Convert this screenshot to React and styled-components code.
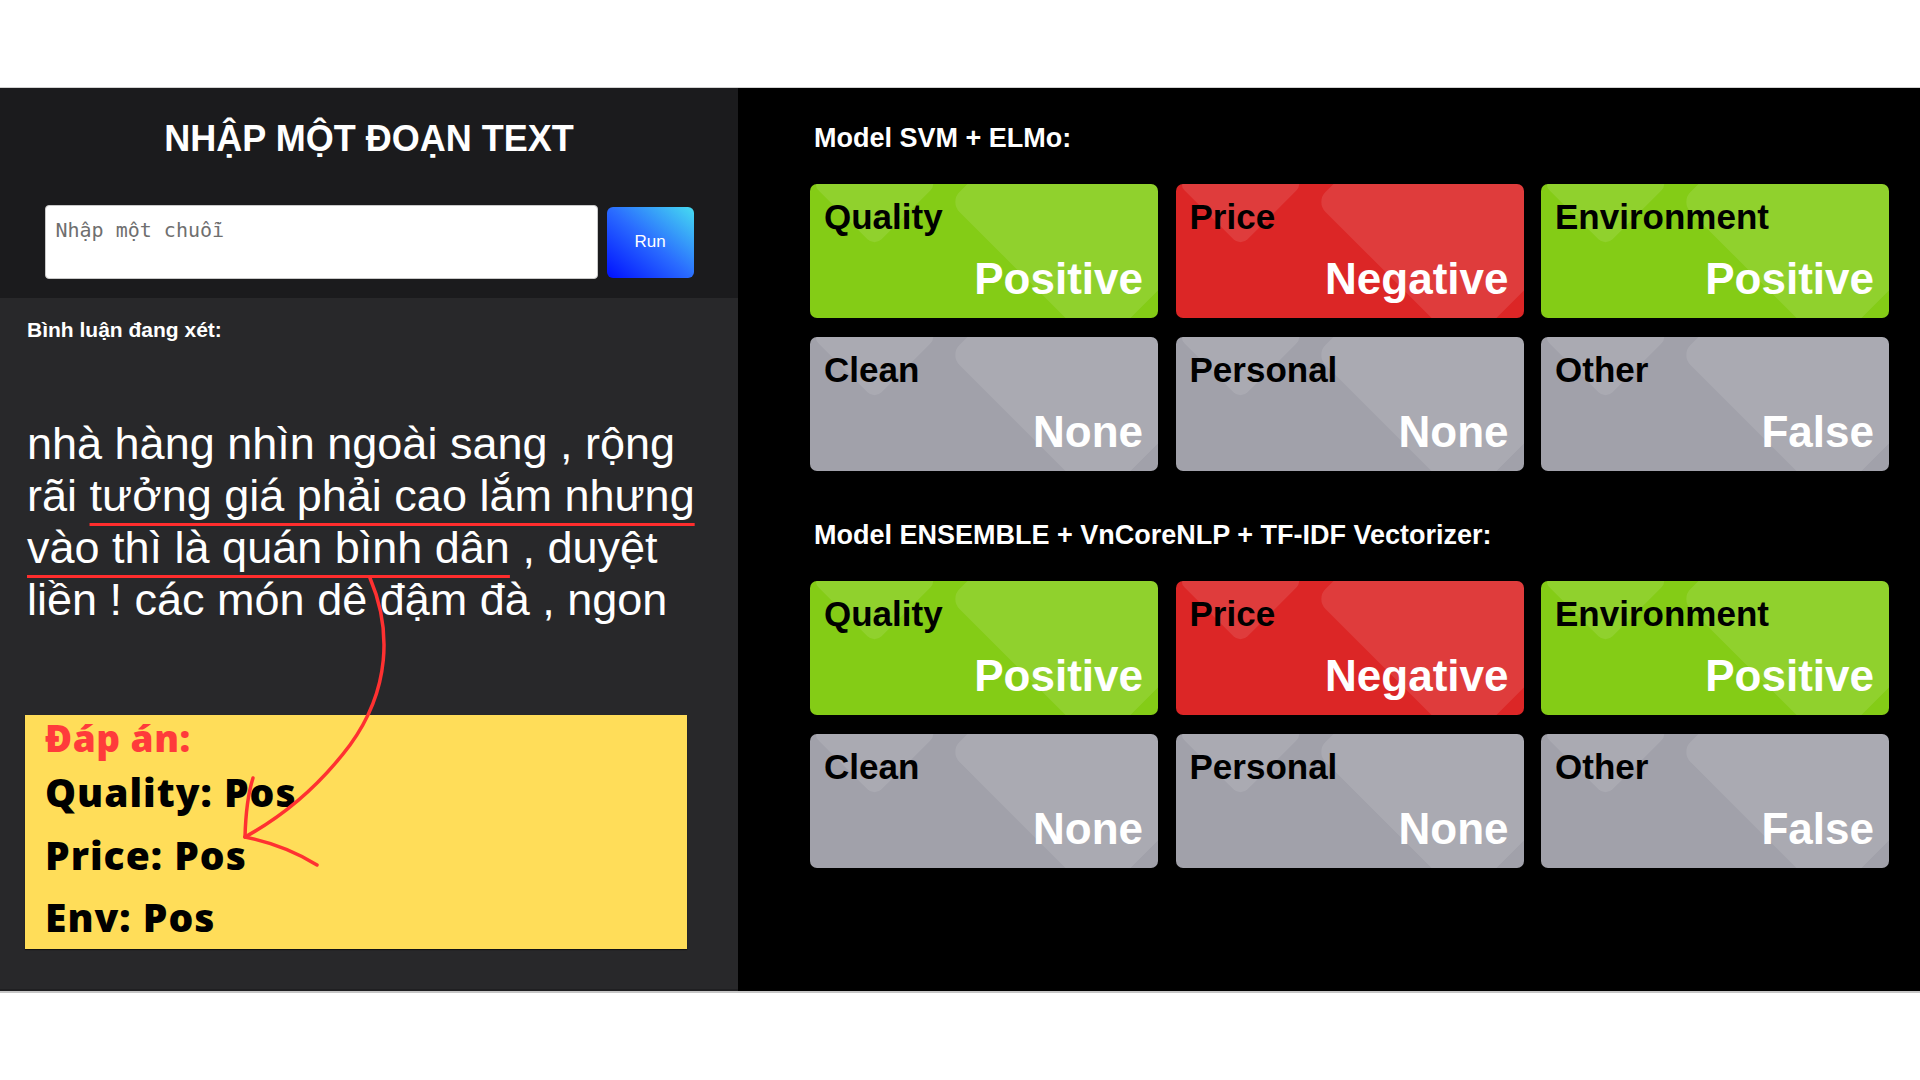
import React from "react";
import styled, { createGlobalStyle } from "styled-components";

const GlobalStyle = createGlobalStyle`
  html, body {
    margin: 0;
    padding: 0;
    background: #ffffff;
  }
  body {
    font-family: "Liberation Sans", Arial, sans-serif;
  }
  * {
    box-sizing: border-box;
  }
`;

const Page = styled.div`
  width: 1920px;
  height: 1080px;
  padding-top: 87px;
  background: #ffffff;
`;

const Frame = styled.div`
  display: flex;
  height: 906px;
  border-top: 1px solid #d2d2d2;
  border-bottom: 2px solid #c6c6c6;
`;

const LeftPanel = styled.section`
  position: relative;
  width: 738px;
  display: flex;
  flex-direction: column;
  background: #28282a;
`;

const Header = styled.div`
  display: flex;
  flex-direction: column;
  align-items: center;
  padding: 30px 0 19px;
  background: #1b1b1d;
`;

const Title = styled.h1`
  margin: 0;
  color: #ffffff;
  font: 700 36px/42px "Liberation Sans", Arial, sans-serif;
`;

const InputRow = styled.div`
  display: flex;
  align-items: center;
  gap: 9px;
  margin-top: 45px;
`;

const TextBox = styled.textarea`
  width: 553px;
  height: 74px;
  padding: 12px 10px;
  border: 1px solid #c9c9c9;
  border-radius: 4px;
  background: #ffffff;
  color: #222;
  font: 400 20px "DejaVu Sans Mono", "Liberation Mono", monospace;
  resize: none;
  outline: none;

  &::placeholder {
    color: #6f6f6f;
  }
`;

const RunButton = styled.button`
  width: 87px;
  height: 71px;
  border: none;
  border-radius: 6px;
  background: linear-gradient(40deg, #0010ff 0%, #2a6cff 50%, #46dcf1 100%);
  color: #ffffff;
  font: 400 17px "Liberation Sans", Arial, sans-serif;
  cursor: pointer;
`;

const Body = styled.div`
  flex: 1;
  padding: 20px 25px 0;
  border-bottom: 2px solid #1f1f21;
`;

const Label = styled.div`
  padding-left: 2px;
  color: #ffffff;
  font: 700 21px/24px "Liberation Sans", Arial, sans-serif;
`;

const Comment = styled.p`
  margin: 76px 0 0;
  padding-left: 2px;
  color: #ffffff;
  font: 400 45px/52px "Liberation Sans", Arial, sans-serif;
`;

const Marked = styled.span`
  text-decoration: underline;
  text-decoration-color: #ff2d2d;
  text-decoration-thickness: 3px;
  text-underline-offset: 12px;
`;

const AnswerBox = styled.div`
  width: 662px;
  margin-top: 89px;
  padding-left: 20px;
  background: #ffdd59;
  box-shadow: 0 1px 1px rgba(0, 0, 0, 0.55);
`;

const AnswerHead = styled.div`
  color: #ff3b3b;
  font: 800 37px/46px "Open Sans", "Liberation Sans", sans-serif;
  letter-spacing: 0.5px;
`;

const AnswerLine = styled.div`
  color: #000000;
  font: 800 39px/62.5px "Open Sans", "Liberation Sans", sans-serif;
  letter-spacing: 1px;
`;

const Arrow = styled.svg`
  position: absolute;
  top: 0;
  left: 0;
  pointer-events: none;
`;

const RightPanel = styled.section`
  flex: 1;
  padding: 35px 31px 0 72px;
  background: #000000;
`;

const Group = styled.div`
  & + & {
    margin-top: 49px;
  }
`;

const GroupTitle = styled.h2`
  margin: 0 0 31px 4px;
  color: #ffffff;
  font: 700 27px/30px "Liberation Sans", Arial, sans-serif;
`;

const Grid = styled.div`
  display: grid;
  grid-template-columns: repeat(3, 348px);
  column-gap: 17.5px;
  row-gap: 19px;
`;

const tones = {
  positive: "#84cc16",
  negative: "#dc2626",
  none: "#a1a1aa",
};

const Card = styled.div`
  position: relative;
  overflow: hidden;
  height: 134px;
  padding: 13px 15px 15px 14px;
  display: flex;
  flex-direction: column;
  justify-content: space-between;
  border-radius: 7px;
  background: ${(p) => tones[p.$tone]};

  &::before,
  &::after {
    content: "";
    position: absolute;
    background: rgba(255, 255, 255, 0.1);
    transform: rotate(45deg);
  }

  &::before {
    left: 20px;
    top: -45px;
    width: 89px;
    height: 89px;
    border-radius: 10px;
  }

  &::after {
    left: 183px;
    top: -87px;
    width: 210px;
    height: 210px;
    border-radius: 14px;
  }
`;

const Aspect = styled.span`
  position: relative;
  z-index: 1;
  color: #000000;
  font: 700 35px/40px "Liberation Sans", Arial, sans-serif;
`;

const Verdict = styled.span`
  position: relative;
  z-index: 1;
  align-self: flex-end;
  color: #ffffff;
  font: 700 44px/48px "Liberation Sans", Arial, sans-serif;
`;

const results = [
  { aspect: "Quality", value: "Positive", tone: "positive" },
  { aspect: "Price", value: "Negative", tone: "negative" },
  { aspect: "Environment", value: "Positive", tone: "positive" },
  { aspect: "Clean", value: "None", tone: "none" },
  { aspect: "Personal", value: "None", tone: "none" },
  { aspect: "Other", value: "False", tone: "none" },
];

const models = ["Model SVM + ELMo:", "Model ENSEMBLE + VnCoreNLP + TF-IDF Vectorizer:"];

const ModelGroup = ({ name }) => (
  <Group>
    <GroupTitle>{name}</GroupTitle>
    <Grid>
      {results.map((r) => (
        <Card key={r.aspect} $tone={r.tone}>
          <Aspect>{r.aspect}</Aspect>
          <Verdict>{r.value}</Verdict>
        </Card>
      ))}
    </Grid>
  </Group>
);

export default function App() {
  return (
    <Page>
      <GlobalStyle />
      <Frame>
        <LeftPanel>
          <Header>
            <Title>NHẬP MỘT ĐOẠN TEXT</Title>
            <InputRow>
              <TextBox placeholder="Nhập một chuỗi" />
              <RunButton>Run</RunButton>
            </InputRow>
          </Header>
          <Body>
            <Label>Bình luận đang xét:</Label>
            <Comment>
              nhà hàng nhìn ngoài sang , rộng rãi{" "}
              <Marked>tưởng giá phải cao lắm nhưng vào thì là quán bình dân</Marked> , duyệt
              liền ! các món dê đậm đà , ngon
            </Comment>
            <AnswerBox>
              <AnswerHead>Đáp án:</AnswerHead>
              <AnswerLine>Quality: Pos</AnswerLine>
              <AnswerLine>Price: Pos</AnswerLine>
              <AnswerLine>Env: Pos</AnswerLine>
            </AnswerBox>
          </Body>
          <Arrow width="738" height="903" viewBox="0 88 738 903">
            <g fill="none" stroke="#ff3131" strokeWidth="3.5" strokeLinecap="round">
              <path d="M370 578 C392 630, 390 690, 350 745 C320 785, 285 815, 245 837" />
              <path d="M245 837 Q246 800, 253 778" />
              <path d="M245 837 Q285 845, 317 865" />
            </g>
          </Arrow>
        </LeftPanel>
        <RightPanel>
          {models.map((m) => (
            <ModelGroup key={m} name={m} />
          ))}
        </RightPanel>
      </Frame>
    </Page>
  );
}
